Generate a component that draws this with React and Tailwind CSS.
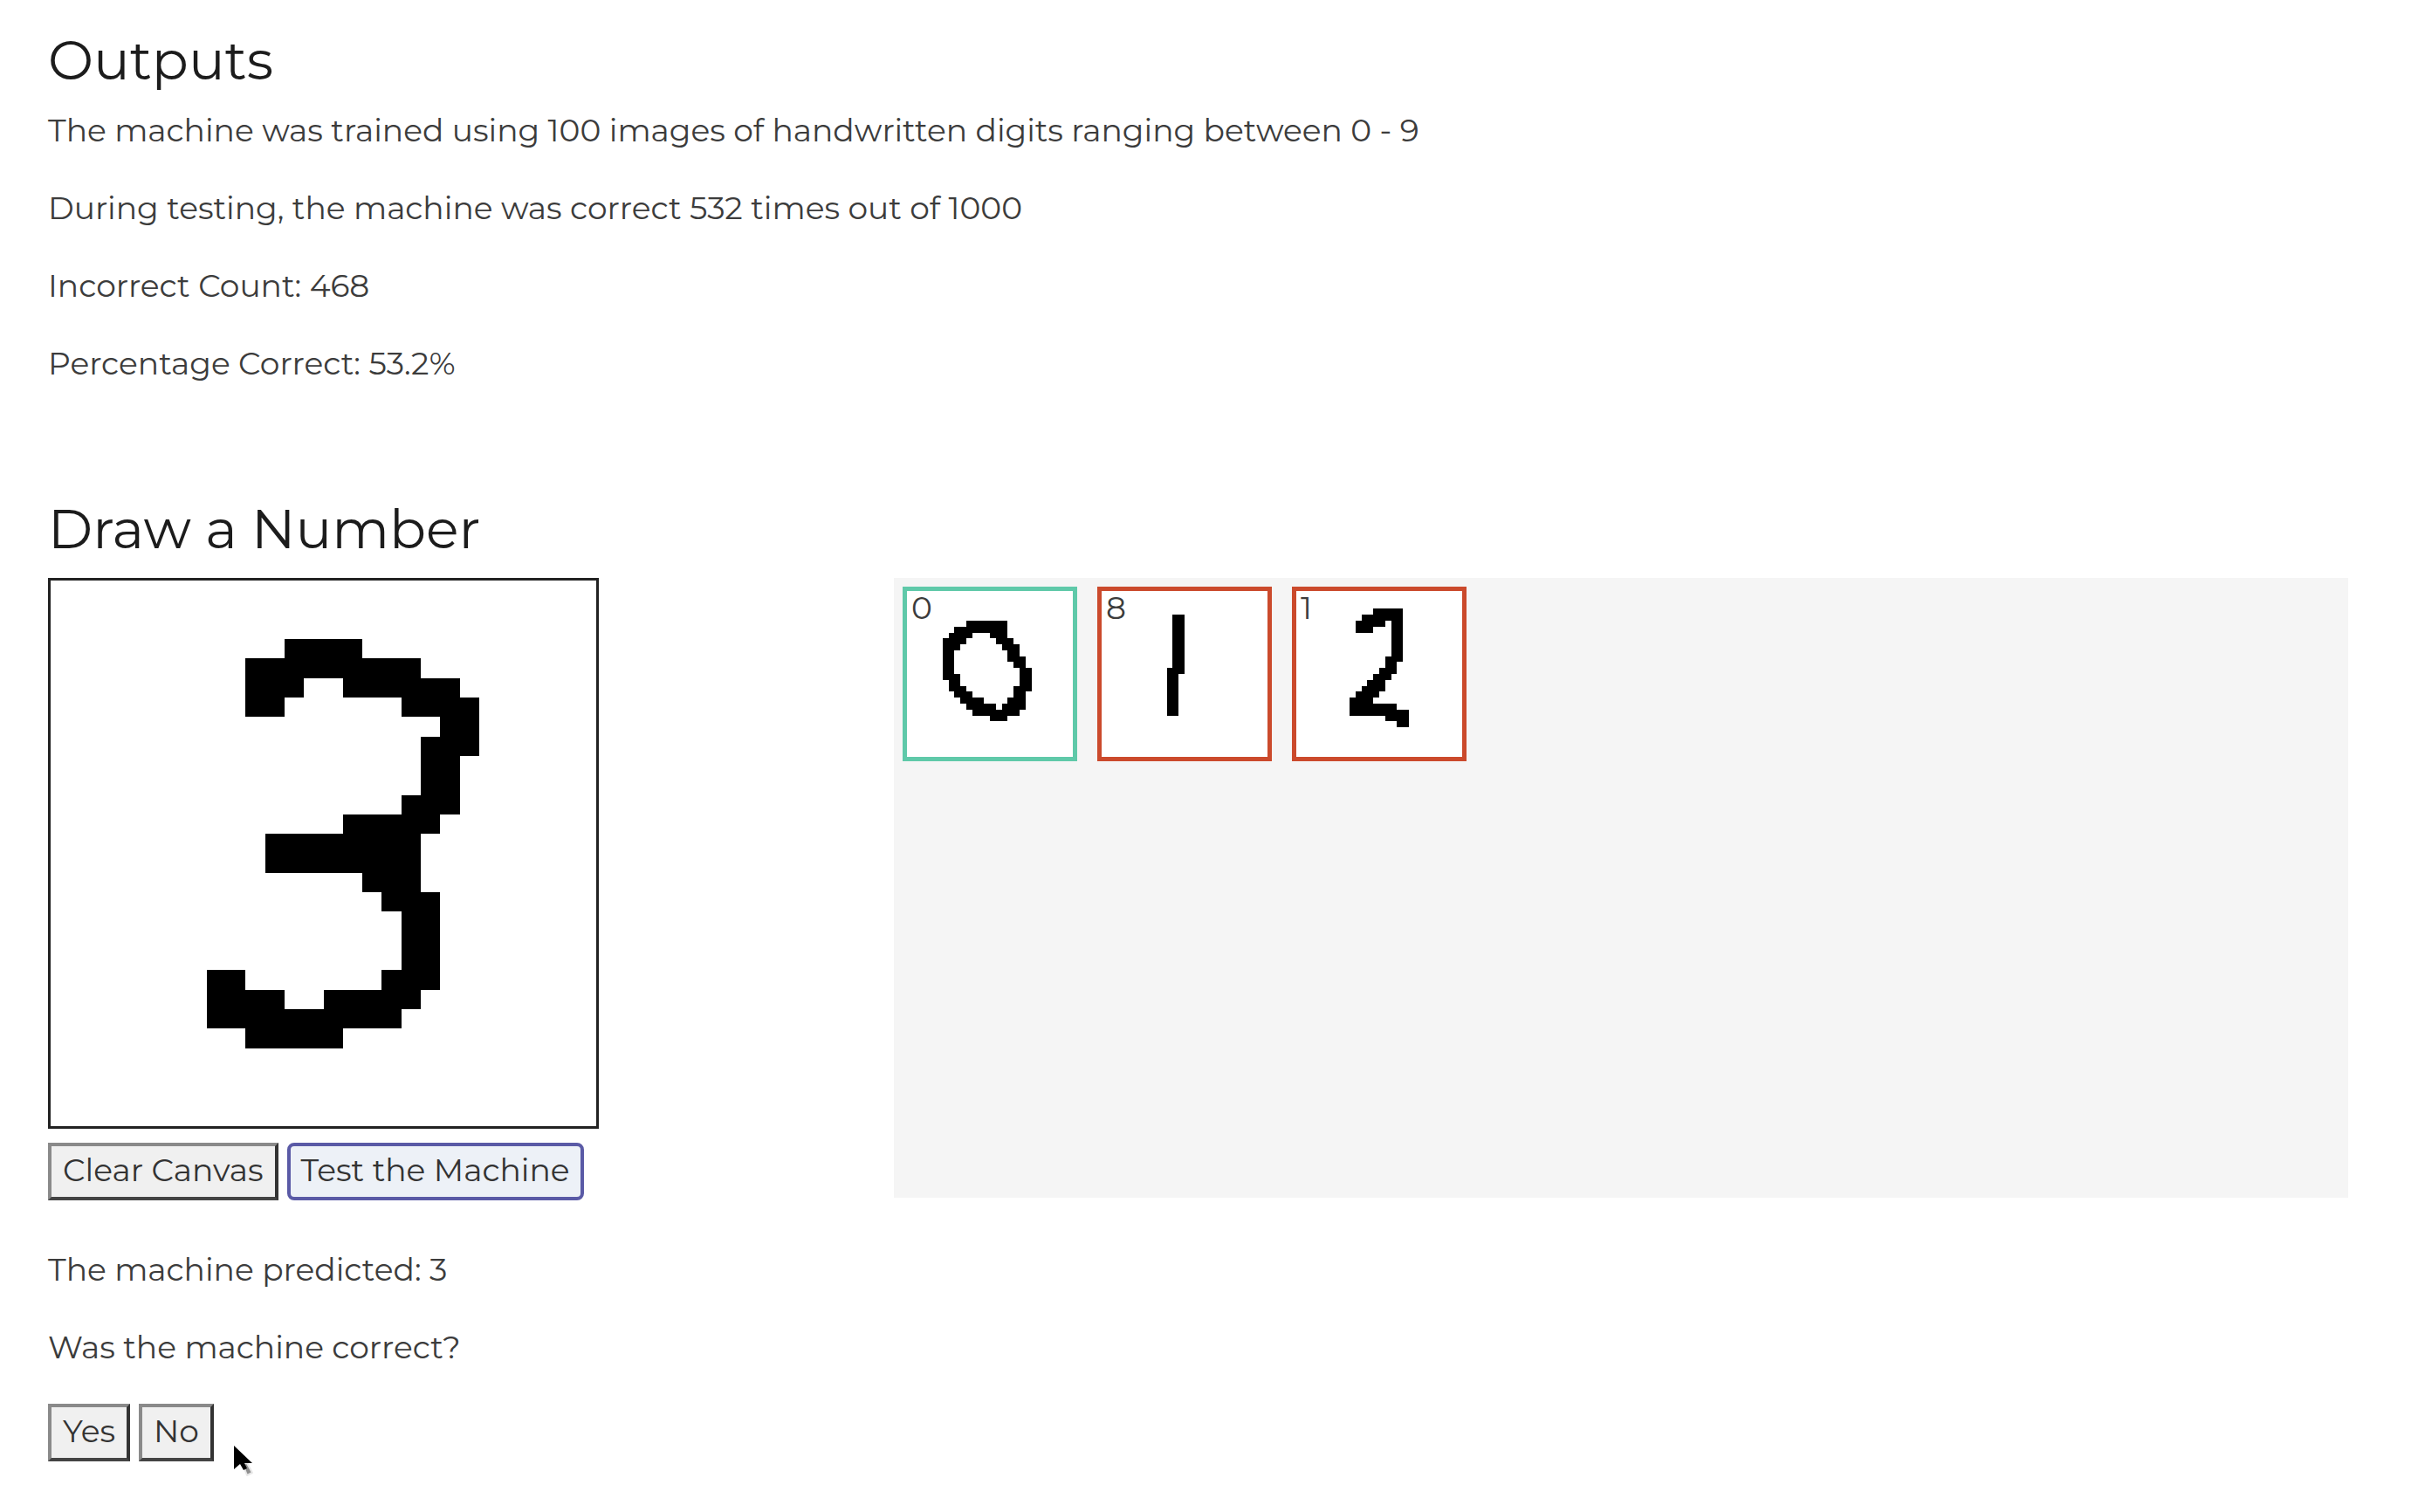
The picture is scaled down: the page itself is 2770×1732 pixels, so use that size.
import React from "react";

// Each stroke is [row, firstColumn, endColumn, height] on a 28 x 28 grid.
const THREE = [
  [3, 12, 16, 1], [4, 10, 19, 1], [5, 10, 13, 1], [5, 15, 21, 1], [6, 10, 12, 1],
  [6, 18, 22, 1], [7, 20, 22, 1], [8, 19, 22, 1], [9, 19, 21, 2], [11, 18, 21, 1],
  [12, 15, 20, 1], [13, 11, 19, 2], [15, 16, 19, 1], [16, 17, 20, 1], [17, 18, 20, 3],
  [20, 8, 10, 1], [20, 17, 20, 1], [21, 8, 12, 1], [21, 14, 19, 1], [22, 8, 18, 1],
  [23, 10, 15, 1],
];

const ZERO = [
  [5, 10, 17, 1], [6, 8, 17, 1], [7, 7, 11, 1], [7, 14, 17, 1], [8, 6, 10, 1],
  [8, 15, 18, 1], [9, 6, 9, 1], [9, 16, 19, 1], [10, 6, 8, 4], [10, 17, 19, 1],
  [11, 17, 20, 1], [12, 18, 20, 1], [13, 19, 21, 3], [14, 6, 9, 1], [15, 7, 9, 1],
  [16, 7, 10, 1], [16, 18, 21, 1], [17, 8, 11, 1], [17, 18, 20, 1], [18, 9, 13, 1],
  [18, 17, 20, 1], [19, 10, 15, 1], [19, 16, 20, 1], [20, 11, 19, 1], [21, 14, 17, 1],
];

const ONE = [[4, 12, 14, 10], [13, 11, 13, 8]];

const TWO = [
  [3, 13, 18, 1], [4, 11, 18, 1], [5, 10, 15, 1], [5, 16, 18, 1], [6, 10, 13, 1],
  [6, 16, 18, 5], [11, 15, 18, 1], [12, 15, 17, 1], [13, 14, 17, 1], [14, 13, 16, 1],
  [15, 12, 15, 1], [16, 11, 15, 1], [17, 10, 14, 1], [18, 9, 13, 1], [19, 9, 17, 1],
  [20, 9, 19, 1], [21, 15, 19, 1], [22, 17, 19, 1],
];

const HISTORY = [
  { guess: 0, label: "Drawn zero", strokes: ZERO, border: "border-[#5fc9a9]" },
  { guess: 8, label: "Drawn one", strokes: ONE, border: "border-[#cb4a2c]" },
  { guess: 1, label: "Drawn two", strokes: TWO, border: "border-[#cb4a2c]" },
];

function Digit({ strokes, label }) {
  return (
    <svg viewBox="0 0 28 28" className="block size-full" role="img" aria-label={label} shapeRendering="crispEdges">
      {strokes.map(([row, from, to, height]) => (
        <rect key={`${row}-${from}`} x={from} y={row} width={to - from} height={height} fill="#000" />
      ))}
    </svg>
  );
}

function Button({ children }) {
  return (
    <button
      type="button"
      className="h-[66px] border-4 border-t-[#8a8a8a] border-r-[#333] border-b-[#444] border-l-[#8a8a8a] bg-[#f0f0f0] px-[13px] pb-1 text-[#333]"
    >
      {children}
    </button>
  );
}

function Cursor() {
  return (
    <svg className="absolute top-[46px] left-[211px] h-10 w-7" viewBox="0 0 28 40" aria-hidden="true">
      <path d="M12 23L17 36L23 33L17 22Z" fill="#8f8f8f" stroke="#e8e8e8" strokeWidth="2" strokeLinejoin="round" />
      <path d="M2 2V29L9 23L13 30L17 28L14 22H23Z" fill="#000" />
    </svg>
  );
}

export default function App() {
  return (
    <main className="min-h-screen bg-white pt-[35px] pr-20 pb-10 pl-[55px] font-['Montserrat','Inter',sans-serif] text-[36px] leading-[44px] text-[#3c3c3c]">
      <section>
        <h2 className="mb-6 text-[62px] leading-[68px] text-[#1c1c1c]">Outputs</h2>
        <div className="flex flex-col gap-[45px]">
          <p>The machine was trained using 100 images of handwritten digits ranging between 0 - 9</p>
          <p>During testing, the machine was correct 532 times out of 1000</p>
          <p>Incorrect Count: 468</p>
          <p>Percentage Correct: 53.2%</p>
        </div>
      </section>

      <section className="mt-[134px]">
        <h2 className="mb-[22px] text-[62px] leading-[68px] text-[#1c1c1c]">Draw a Number</h2>
        <div className="grid grid-cols-[969fr_1666fr] items-start">
          <div>
            <div className="aspect-square w-[631px] max-w-full border-3 border-[#222] bg-white">
              <Digit strokes={THREE} label="Drawn three" />
            </div>
            <div className="mt-4 flex gap-[10px]">
              <Button>Clear Canvas</Button>
              <button
                type="button"
                className="h-[66px] rounded-lg border-4 border-[#5a5aa6] bg-[#edf1f7] px-3 pb-1 text-[#333]"
              >
                Test the Machine
              </button>
            </div>
          </div>
          <ul className="flex min-h-[710px] flex-wrap content-start gap-[23px] bg-[#f5f5f5] p-[10px]">
            {HISTORY.map((item) => (
              <li key={item.guess} className={`relative size-[200px] border-[5px] bg-white ${item.border}`}>
                <span className="absolute top-0 left-[5px] leading-[38px]">{item.guess}</span>
                <Digit strokes={item.strokes} label={item.label} />
              </li>
            ))}
          </ul>
        </div>
      </section>

      <section className="mt-[57px] flex flex-col gap-[45px]">
        <p>The machine predicted: 3</p>
        <p>Was the machine correct?</p>
        <div className="relative -mt-0.5 flex gap-[10px]">
          <Button>Yes</Button>
          <Button>No</Button>
          <Cursor />
        </div>
      </section>
    </main>
  );
}
